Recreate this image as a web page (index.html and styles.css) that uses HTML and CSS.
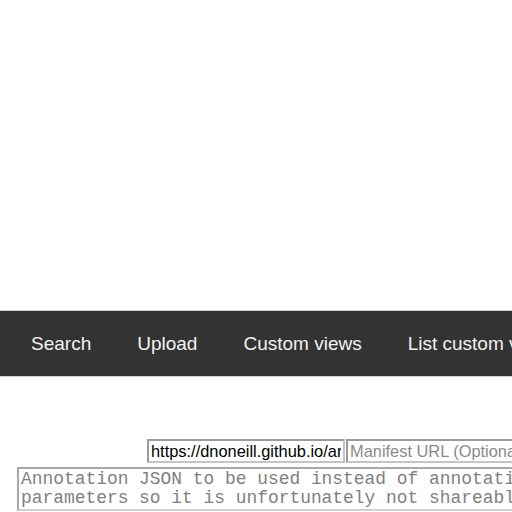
FILE: index.html
```html
<!DOCTYPE html>
<html>
<head>
<meta charset="utf-8">
<link rel="stylesheet" href="styles.css">
</head>
<body>
<div class="banner"></div>
<nav class="topnav">
  <a class="nav-item" href="#">Search</a>
  <a class="nav-item" href="#">Upload</a>
  <a class="nav-item" href="#">Custom views</a>
  <a class="nav-item" href="#">List custom views</a>
</nav>
<form class="form">
  <div class="url-row">
    <input class="field field-url" type="text" value="https://dnoneill.github.io/annotate/">
    <input class="field field-manifest" type="text" placeholder="Manifest URL (Optional)">
  </div>
  <textarea class="json-area" rows="2" placeholder="Annotation JSON to be used instead of annotation parameters so it is unfortunately not shareable via a link"></textarea>
</form>
</body>
</html>
```
FILE: styles.css
```css
html, body {
  margin: 0;
  padding: 0;
  overflow: hidden;
  background: #fff;
  font-family: "Liberation Sans", Arial, sans-serif;
}
.banner {
  height: 310px;
}
.topnav {
  display: flex;
  align-items: center;
  height: 65px;
  background: #333;
  border-top: 1px solid #d0d0d0;
  border-bottom: 1px solid #d0d0d0;
  padding-left: 8px;
  white-space: nowrap;
  width: 800px;
}
.nav-item {
  color: #f2f2f2;
  text-decoration: none;
  font-size: 19px;
  padding: 0 23px;
}
.form {
  padding-top: 62px;
}
.url-row {
  display: flex;
  padding-left: 147px;
  width: 800px;
}
.field {
  box-sizing: border-box;
  height: 24px;
  font-family: "Liberation Sans", Arial, sans-serif;
  font-size: 16.4px;
  padding: 0 2px;
  border: 2px solid #c4c4c4;
  border-top-color: #9a9a9a;
  border-left-color: #9a9a9a;
  color: #000;
  background: #fff;
  outline: none;
}
.field-url {
  width: 198px;
}
.field-manifest {
  width: 220px;
  margin-left: 1px;
}
.field::placeholder {
  color: #8a8a8a;
}
.json-area {
  display: block;
  margin: 4px 0 0 17px;
  width: 580px;
  height: 38px;
  padding: 1px 2px;
  font-family: "Liberation Mono", "Courier New", monospace;
  font-size: 17.9px;
  line-height: 19px;
  border: 2px solid #cfcfcf;
  border-top-color: #a8a8a8;
  border-left-color: #a8a8a8;
  resize: none;
  outline: none;
  overflow: hidden;
}
.json-area::placeholder {
  color: #7f7f7f;
}
```
